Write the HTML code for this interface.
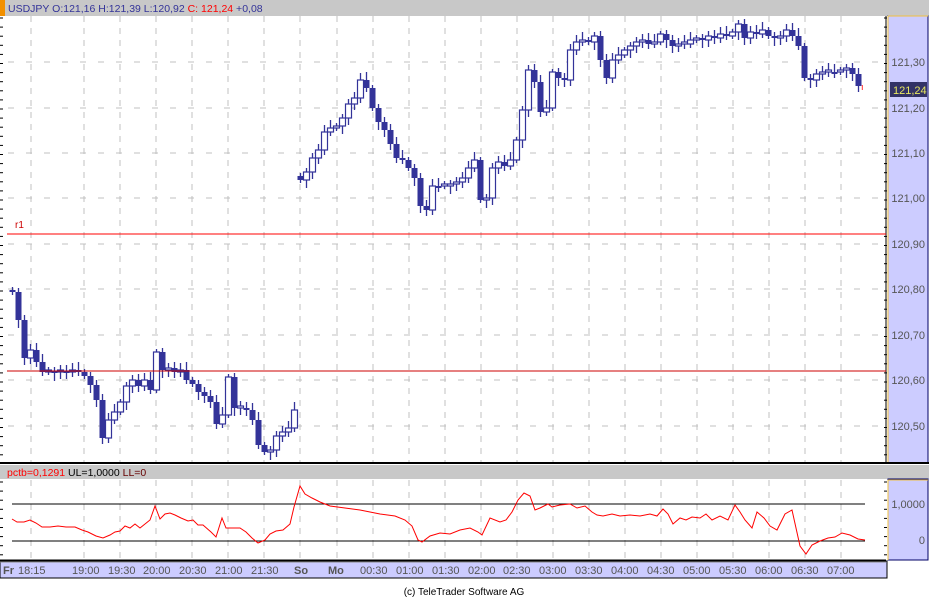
<!DOCTYPE html>
<html><head><meta charset="utf-8"><style>
body{margin:0;background:#fff;width:929px;height:598px;overflow:hidden;font-family:"Liberation Sans",sans-serif}
svg{position:absolute;left:0;top:0}
</style></head><body>
<svg id="s" width="929" height="598" xmlns="http://www.w3.org/2000/svg" font-family="Liberation Sans, sans-serif">
<rect x="0" y="0" width="929" height="598" fill="#fff"/>
<rect x="0" y="0" width="929" height="16" fill="#c8c8c8"/>
<rect x="0" y="0" width="5" height="16" fill="#f29000"/>
<text x="8" y="12" font-size="10.5" fill="#333399">USDJPY O:121,16 H:121,39 L:120,92 <tspan fill="#ff0000">C: 121,24</tspan> +0,08</text>
<rect x="888" y="16" width="40" height="447" fill="#ccccff" stroke="#000066" stroke-width="1"/>
<line x1="888" y1="16" x2="928" y2="16" stroke="#f0c040"/>
<line x1="888" y1="16" x2="888" y2="463" stroke="#f0c040"/>
<g id="grid"></g>
<g id="candles"></g>
<line x1="7" y1="234" x2="886" y2="234" stroke="#ff0000"/>
<text x="15" y="228" font-size="10" fill="#cc0000">r1</text>
<line x1="7" y1="371" x2="886" y2="371" stroke="#cc0000"/>
<line x1="0" y1="463" x2="929" y2="463" stroke="#000" stroke-width="2"/>
<rect x="890" y="82" width="37" height="15" fill="#333366"/>
<text x="893" y="94" font-size="11" fill="#e8e860">121,24</text>
<text x="861" y="90" font-size="9" fill="#ff0000">ı</text>
<rect x="0" y="465" width="929" height="14" fill="#c8c8c8"/>
<text x="7" y="476" font-size="10.5" fill="#000"><tspan fill="#ff0000">pctb=0,1291</tspan> UL=1,0000 <tspan fill="#660000">LL=0</tspan></text>
<rect x="888" y="479" width="40" height="81" fill="#ccccff" stroke="#000066"/>
<line x1="888" y1="480" x2="928" y2="480" stroke="#f0c040"/>
<line x1="888" y1="480" x2="888" y2="560" stroke="#f0c040"/>
<text x="925" y="508" font-size="11" fill="#555" text-anchor="end">1,0000</text>
<text x="925" y="544" font-size="11" fill="#555" text-anchor="end">0</text>
<line x1="12" y1="504" x2="865" y2="504" stroke="#000"/>
<line x1="12" y1="541" x2="865" y2="541" stroke="#000"/>
<polyline fill="none" stroke="#ff0000" stroke-width="1" points="12,519 17,522 24,522 30,520 36,523 42,527 50,527 58,526 66,527 75,527 82,530 88,532 96,536 103,538 110,535 115,532 120,531 125,526 130,528 135,524 140,528 145,524 150,520 155,506 160,519 165,514 170,513 175,515 181,518 188,521 193,520 198,525 203,525 211,532 216,537 222,518 226,528 233,528 240,528 246,532 252,538 258,543 265,540 270,534 276,531 283,530 290,524 294,507 300,486 305,494 312,498 320,502 330,506 345,508 360,510 380,514 395,516 405,520 412,526 418,540 422,542 430,536 440,533 450,534 460,530 470,528 478,532 482,535 490,518 500,522 506,520 512,512 518,500 524,493 530,496 535,510 540,508 548,504 552,507 560,505 570,504 577,508 585,506 592,512 597,515 603,516 612,514 620,516 630,515 640,516 650,514 657,516 663,509 668,514 673,524 680,518 686,520 692,517 700,518 706,514 712,520 720,516 728,520 735,505 740,512 745,520 752,528 757,512 764,518 770,526 777,530 785,514 792,510 800,546 806,554 812,545 820,541 828,538 835,537 842,533 850,535 858,539 865,540"/>
<line x1="0" y1="560" x2="886" y2="560" stroke="#000" stroke-width="1"/>
<rect x="0" y="561" width="887" height="17" fill="#ccccff" stroke="#000" stroke-width="1"/>
<line x1="0" y1="562" x2="886" y2="562" stroke="#888"/>
<g font-size="11" fill="#555" id="tl"></g>
<text x="464" y="595" font-size="10" fill="#000" text-anchor="middle">(c) TeleTrader Software AG</text>
</svg>
<script>
var NS="http://www.w3.org/2000/svg";
function el(p,t,a){var e=document.createElementNS(NS,t);for(var k in a)e.setAttribute(k,a[k]);p.appendChild(e);return e;}
var g=document.getElementById('grid');
var vx=[31,84,120,156,192,228,264,300,337,373,409,445,481,517,553,589,625,661,697,733,769,805,841];
vx.forEach(function(x){el(g,'line',{x1:x,y1:16,x2:x,y2:463,stroke:'#c0c0c0','stroke-dasharray':'6,6'});el(g,'line',{x1:x,y1:480,x2:x,y2:560,stroke:'#c0c0c0','stroke-dasharray':'6,6'});});
var labs=[["121,30",62],["121,20",108],["121,10",153],["121,00",198],["120,90",244],["120,80",289],["120,70",335],["120,60",380],["120,50",426]];
labs.forEach(function(l){el(g,'line',{x1:8,y1:l[1],x2:886,y2:l[1],stroke:'#c0c0c0','stroke-dasharray':'6,12'});var t=el(g,'text',{x:925,y:l[1]+4,'font-size':11,fill:'#555','text-anchor':'end'});t.textContent=l[0];});
for(var y=18;y<463;y+=9.1){el(g,'line',{x1:884,y1:y,x2:887,y2:y,stroke:'#000'});el(g,'line',{x1:0,y1:y,x2:3,y2:y,stroke:'#000'});}
for(var y=482;y<560;y+=9.1){el(g,'line',{x1:884,y1:y,x2:887,y2:y,stroke:'#000'});el(g,'line',{x1:0,y1:y,x2:3,y2:y,stroke:'#000'});}
el(g,'line',{x1:886,y1:16,x2:886,y2:463,stroke:'#000'});
var s1=[[12,292],[18,320],[24,358],[30,350],[36,362],[42,372],[48,371],[54,372],[60,371],[66,372],[72,370],[78,372],[84,376],[90,385],[96,400],[102,438],[108,420],[114,412],[120,402],[126,386],[132,380],[138,386],[144,380],[150,390],[156,352],[162,370],[168,368],[174,372],[180,370],[186,380],[192,384],[198,392],[204,396],[210,402],[216,424],[222,415],[228,377],[234,408],[240,408],[246,410],[252,420],[258,445],[264,452],[270,450],[276,436],[282,432],[288,428],[294,410]];
var s2=[[300,180],[306,172],[312,158],[318,150],[324,132],[330,128],[336,126],[342,118],[348,104],[354,98],[360,80],[366,88],[372,108],[378,122],[384,130],[390,144],[396,158],[402,160],[408,168],[414,178],[420,206],[426,210],[432,186],[438,186],[444,186],[450,184],[456,182],[462,178],[468,168],[474,160],[480,200],[486,198],[492,168],[498,162],[504,166],[510,160],[516,140],[522,110],[528,70],[534,82],[540,112],[546,108],[552,72],[558,78],[564,80],[570,50],[576,42],[582,40],[588,42],[594,36],[600,60],[606,78],[612,60],[618,55],[624,50],[630,46],[636,42],[642,40],[648,44],[654,42],[660,34],[666,40],[672,46],[678,44],[684,44],[690,40],[696,38],[702,40],[708,36],[714,38],[720,34],[726,36],[732,32],[738,24],[744,38],[750,32],[756,34],[762,30],[768,36],[774,38],[780,36],[786,30],[792,36],[798,46],[804,78],[810,80],[816,74],[822,72],[828,72],[834,72],[840,70],[846,68],[852,74],[858,86]];
var c=document.getElementById('candles');
function draw(seq,start){var prev=start;seq.forEach(function(p,i){var o=prev,cl=p[1];if(Math.abs(o-cl)<2)cl=o+2*((i%2)?1:-1);var top=Math.min(o,cl),bot=Math.max(o,cl);var hi=top-3-(i*7%6),lo=bot+3+(i*5%6);
el(c,'line',{x1:p[0]+0.5,y1:hi,x2:p[0]+0.5,y2:lo,stroke:'#333399','stroke-width':1.3});
if(cl<o)el(c,'rect',{x:p[0]-2.5,y:top,width:6,height:bot-top,fill:'#fff',stroke:'#333399','stroke-width':1.2});
else el(c,'rect',{x:p[0]-2.5,y:top,width:6,height:bot-top,fill:'#333399'});prev=p[1];});}
draw(s1,290);draw(s2,176);
var tl=document.getElementById('tl');
[["Fr",3,1],["18:15",18],["19:00",72],["19:30",108],["20:00",143],["20:30",179],["21:00",215],["21:30",251],["So",294,1],["Mo",328,1],["00:30",360],["01:00",396],["01:30",432],["02:00",468],["02:30",503],["03:00",539],["03:30",575],["04:00",611],["04:30",647],["05:00",683],["05:30",719],["06:00",755],["06:30",791],["07:00",827]].forEach(function(a){var t=el(tl,'text',{x:a[1],y:574});if(a[2])t.setAttribute('font-weight','bold');t.textContent=a[0];});
</script>
</body></html>
